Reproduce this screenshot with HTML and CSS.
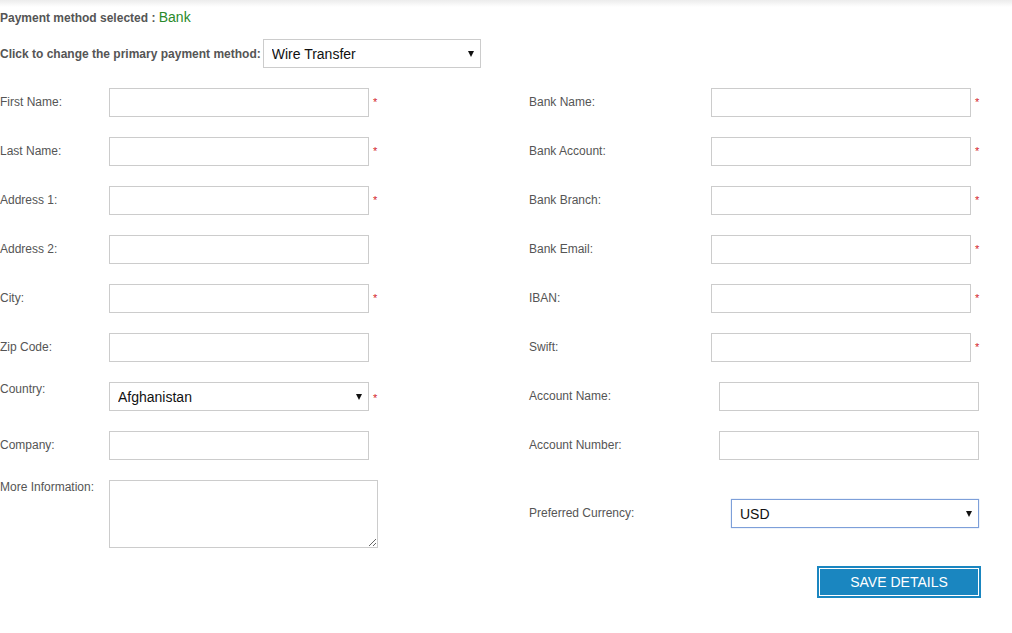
FILE: index.html
```html
<!DOCTYPE html>
<html>
<head>
<meta charset="utf-8">
<link rel="stylesheet" href="styles.css">
</head>
<body>
<div class="topshade"></div>
<div class="page">
  <div class="selected-line">
    <span class="strong-label">Payment method selected :</span> <span class="method">Bank</span>
  </div>
  <div class="change-line">
    <span class="strong-label">Click to change the primary payment method:</span>
    <span class="select-wrap method-select">
      <select class="sel"><option>Wire Transfer</option></select>
    </span>
  </div>

  <div class="columns">
    <div class="col-left">
      <div class="row"><label class="lbl">First Name:</label><input class="inp" type="text"><span class="req">*</span></div>
      <div class="row"><label class="lbl">Last Name:</label><input class="inp" type="text"><span class="req">*</span></div>
      <div class="row"><label class="lbl">Address 1:</label><input class="inp" type="text"><span class="req">*</span></div>
      <div class="row"><label class="lbl">Address 2:</label><input class="inp" type="text"></div>
      <div class="row"><label class="lbl">City:</label><input class="inp" type="text"><span class="req">*</span></div>
      <div class="row"><label class="lbl">Zip Code:</label><input class="inp" type="text"></div>
      <div class="row row-top"><label class="lbl">Country:</label><span class="select-wrap country-select"><select class="sel"><option>Afghanistan</option></select></span><span class="req">*</span></div>
      <div class="row"><label class="lbl">Company:</label><input class="inp" type="text"></div>
      <div class="row row-top"><label class="lbl">More Information:</label><textarea class="txt"></textarea></div>
    </div>

    <div class="col-right">
      <div class="row"><label class="lbl lbl-r">Bank Name:</label><input class="inp" type="text"><span class="req">*</span></div>
      <div class="row"><label class="lbl lbl-r">Bank Account:</label><input class="inp" type="text"><span class="req">*</span></div>
      <div class="row"><label class="lbl lbl-r">Bank Branch:</label><input class="inp" type="text"><span class="req">*</span></div>
      <div class="row"><label class="lbl lbl-r">Bank Email:</label><input class="inp" type="text"><span class="req">*</span></div>
      <div class="row"><label class="lbl lbl-r">IBAN:</label><input class="inp" type="text"><span class="req">*</span></div>
      <div class="row"><label class="lbl lbl-r">Swift:</label><input class="inp" type="text"><span class="req">*</span></div>
      <div class="row"><label class="lbl lbl-acc">Account Name:</label><input class="inp" type="text"></div>
      <div class="row"><label class="lbl lbl-acc">Account Number:</label><input class="inp" type="text"></div>
      <div class="row row-currency"><label class="lbl lbl-cur">Preferred Currency:</label><span class="select-wrap currency-select"><select class="sel sel-focus"><option>USD</option></select></span></div>
      <div class="btn-row"><button class="save-btn">SAVE DETAILS</button></div>
    </div>
  </div>
</div>
</body>
</html>
```

FILE: styles.css
```css
* { box-sizing: border-box; }

html, body {
  margin: 0;
  padding: 0;
  background: #ffffff;
  font-family: "Liberation Sans", Arial, sans-serif;
  font-size: 12px;
  color: #555555;
}

.topshade {
  height: 7px;
  background: linear-gradient(to bottom, #ececec, #ffffff);
  margin-bottom: -7px;
}

.page {
  padding: 0 0 40px 0;
}

.selected-line {
  height: 20px;
  margin-top: 7px;
  line-height: 20px;
}

.strong-label {
  font-weight: bold;
  color: #555555;
  font-size: 12px;
}

.method {
  color: #2a8a2a;
  font-size: 14px;
}

.change-line {
  margin-top: 12px;
  display: flex;
  align-items: center;
  gap: 2px;
}

.select-wrap {
  position: relative;
  display: inline-block;
  flex: none;
}

.select-wrap::after {
  content: "";
  position: absolute;
  top: 12px;
  right: 7px;
  border-left: 3.5px solid transparent;
  border-right: 3.5px solid transparent;
  border-top: 6px solid #111;
  pointer-events: none;
}

.sel {
  -webkit-appearance: none;
  appearance: none;
  width: 100%;
  height: 29px;
  border: 1px solid #cccccc;
  border-radius: 0;
  background: #ffffff;
  font-family: "Liberation Sans", Arial, sans-serif;
  font-size: 14px;
  color: #111;
  padding: 0 20px 0 8px;
  outline: none;
  display: block;
}

.method-select { width: 218px; }
.country-select { width: 260px; }
.currency-select { width: 248px; }

.sel-focus {
  border: 1px solid #7d9fd9;
  box-shadow: 0 0 1px #9db8e6;
}

.columns {
  display: flex;
  margin-top: 20px;
}

.col-left {
  width: 529px;
  flex: none;
}

.col-right {
  width: 470px;
  flex: none;
}

.row {
  display: flex;
  align-items: center;
  margin-bottom: 20px;
  min-height: 29px;
}

.row-top {
  align-items: flex-start;
}

.row-top .lbl {
  line-height: 14px;
}

.lbl {
  width: 109px;
  flex: none;
  font-size: 12px;
  color: #555555;
  margin-top: -1px;
}

.row-top .lbl { margin-top: 0; }

.lbl-r { width: 182px; }
.lbl-acc { width: 190px; }
.lbl-cur { width: 202px; }

.inp {
  width: 260px;
  height: 29px;
  border: 1px solid #cccccc;
  border-radius: 0;
  padding: 0 6px;
  font-family: "Liberation Sans", Arial, sans-serif;
  font-size: 14px;
  outline: none;
  flex: none;
}

.req {
  color: #d41b2c;
  font-size: 11px;
  line-height: 11px;
  margin-left: 4px;
  align-self: center;
}

.row-top .req {
  margin-top: 11px;
  align-self: flex-start;
}

.txt {
  width: 269px;
  height: 68px;
  border: 1px solid #cccccc;
  border-radius: 0;
  resize: both;
  font-family: "Liberation Sans", Arial, sans-serif;
  font-size: 12px;
  margin: 0;
  outline: none;
  display: block;
}

.row-currency {
  margin-top: 39px;
  margin-bottom: 38px;
}

.btn-row {
  padding-left: 288px;
  display: flex;
}

.save-btn {
  width: 164px;
  height: 32px;
  background: #1a86c0;
  border: 2px solid #1a86c0;
  outline: 1px solid #ffffff;
  outline-offset: -3px;
  color: #ffffff;
  font-family: "Liberation Sans", Arial, sans-serif;
  font-size: 14px;
  text-transform: uppercase;
  cursor: pointer;
  padding: 0;
  border-radius: 0;
}
```
